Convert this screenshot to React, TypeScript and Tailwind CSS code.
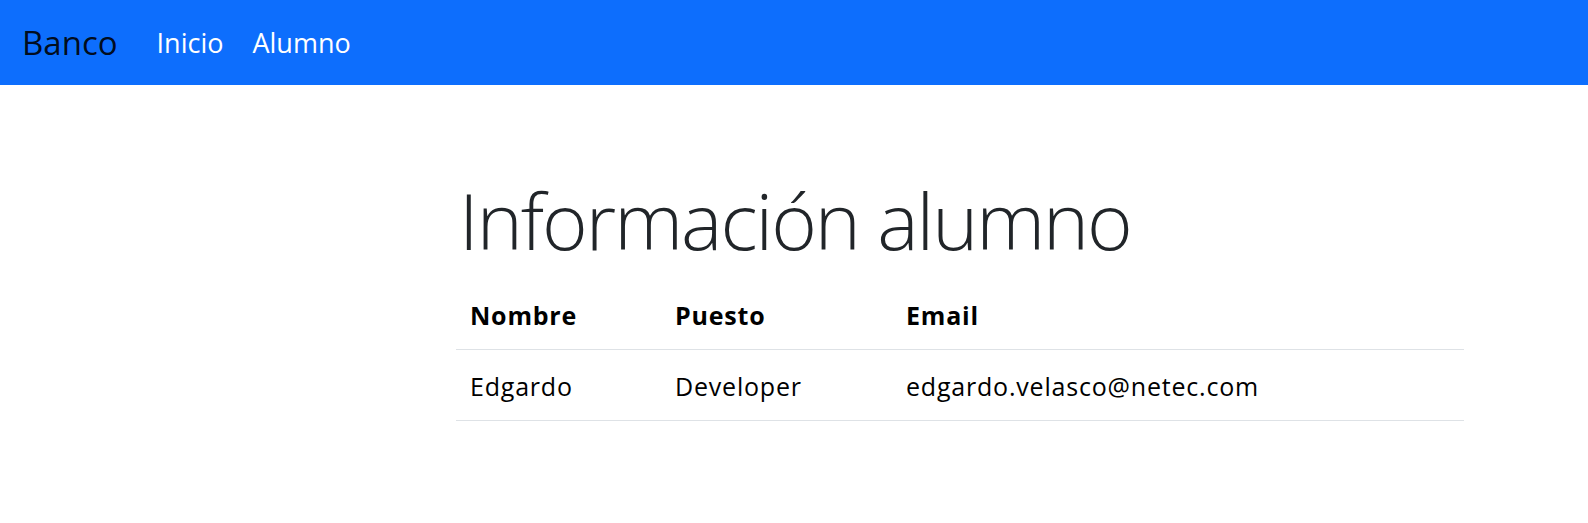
import React from 'react';

const alumnos = [
  { nombre: 'Edgardo', puesto: 'Developer', email: 'edgardo.velasco@netec.com' },
];

const App: React.FC = () => {
  return (
    <div className="min-h-screen bg-white font-['Open_Sans',sans-serif] text-[#212529]">
      <nav className="h-[85px] bg-[#0d6efd] flex items-center pl-[22px]">
        <a className="text-[33px] text-black/90 leading-none mr-[39px]">Banco</a>
        <div className="flex items-center gap-[29px] text-[27px] text-white leading-none">
          <a>Inicio</a>
          <a>Alumno</a>
        </div>
      </nav>

      <main className="pl-[456px] pt-[85px] w-[1464px]">
        <h1 className="text-[78px] font-light leading-[100px] tracking-[-2px] pl-[3px] mb-[8px]">
          Información alumno
        </h1>
        <table className="w-[1008px] text-black text-[25px] tracking-[0.8px] border-collapse">
          <thead>
            <tr className="border-b border-[#dee2e6] h-[71px]">
              <th className="text-left font-bold pl-[14px] pr-[12px] pt-[4px] w-[207px]">Nombre</th>
              <th className="text-left font-bold px-[12px] pt-[4px] w-[231px]">Puesto</th>
              <th className="text-left font-bold px-[12px] pt-[4px]">Email</th>
            </tr>
          </thead>
          <tbody>
            {alumnos.map((a) => (
              <tr key={a.email} className="border-b border-[#dee2e6] h-[71px]">
                <td className="pl-[14px] pr-[12px] pt-[4px]">{a.nombre}</td>
                <td className="px-[12px] pt-[4px]">{a.puesto}</td>
                <td className="px-[12px] pt-[4px]">{a.email}</td>
              </tr>
            ))}
          </tbody>
        </table>
      </main>
    </div>
  );
};

export default App;
